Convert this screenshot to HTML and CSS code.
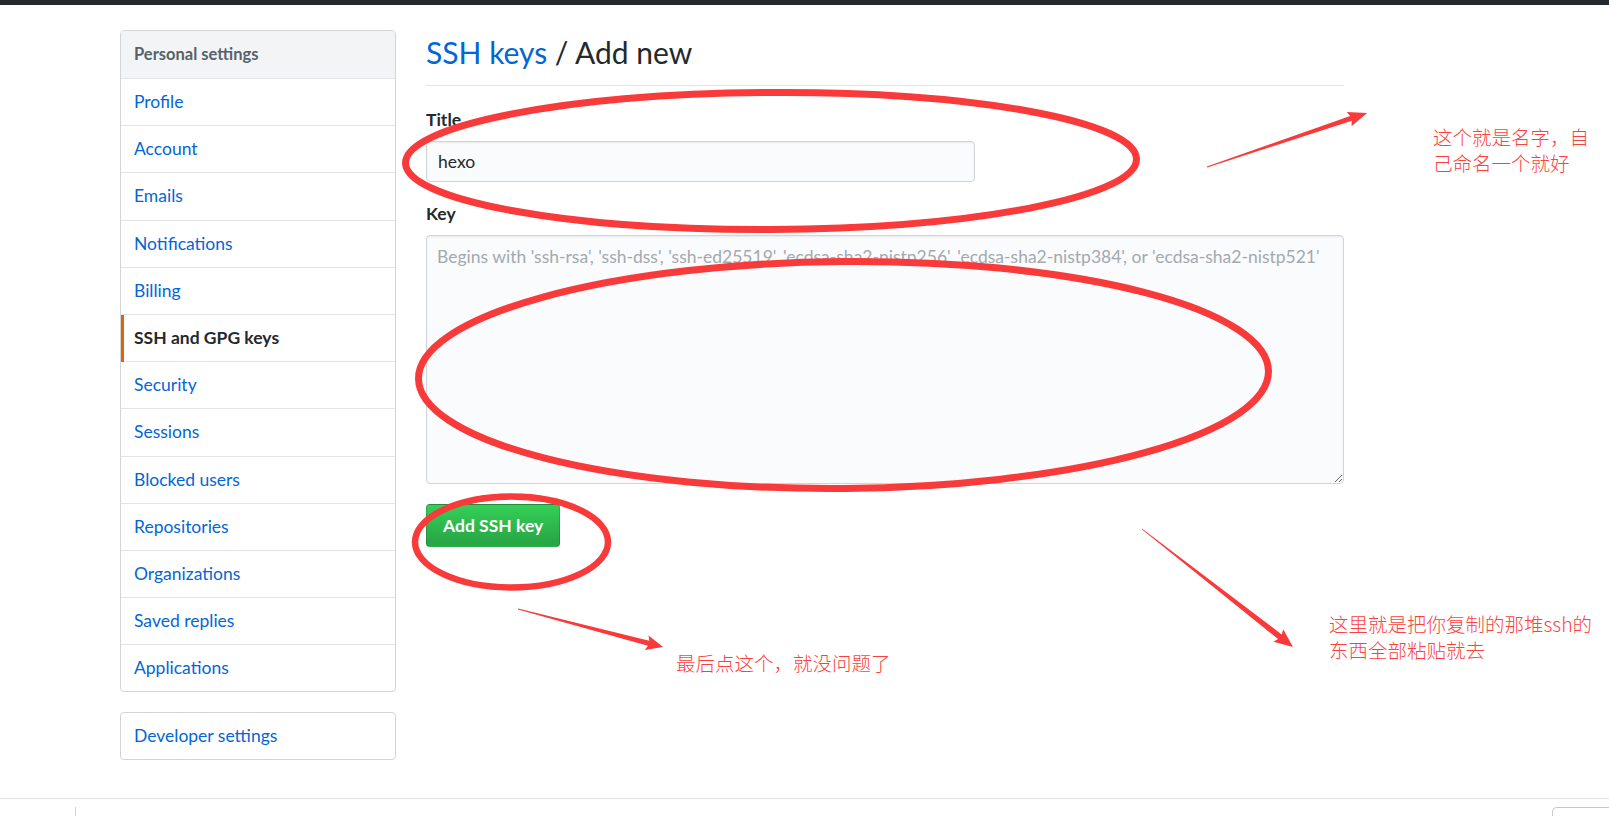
FILE: index.html
```html
<!DOCTYPE html>
<html lang="zh">
<head>
<meta charset="utf-8">
<title>SSH keys / Add new</title>
<link rel="stylesheet" href="styles.css">
</head>
<body>
<div class="topbar"></div>
<div class="page">
  <aside class="sidebar">
    <nav class="menu">
      <div class="menu-heading">Personal settings</div>
      <a class="menu-item" href="#">Profile</a>
      <a class="menu-item" href="#">Account</a>
      <a class="menu-item" href="#">Emails</a>
      <a class="menu-item" href="#">Notifications</a>
      <a class="menu-item" href="#">Billing</a>
      <a class="menu-item selected" href="#">SSH and GPG keys</a>
      <a class="menu-item" href="#">Security</a>
      <a class="menu-item" href="#">Sessions</a>
      <a class="menu-item" href="#">Blocked users</a>
      <a class="menu-item" href="#">Repositories</a>
      <a class="menu-item" href="#">Organizations</a>
      <a class="menu-item" href="#">Saved replies</a>
      <a class="menu-item" href="#">Applications</a>
    </nav>
    <nav class="menu dev">
      <a class="menu-item" href="#">Developer settings</a>
    </nav>
  </aside>
  <main class="main">
    <div class="subhead">
      <h2 class="subhead-heading"><a href="#">SSH keys</a> / Add new</h2>
    </div>
    <form class="form">
      <div class="form-group">
        <label class="label" for="title">Title</label>
        <input id="title" class="input" type="text" value="hexo">
      </div>
      <div class="form-group">
        <label class="label" for="key">Key</label>
        <textarea id="key" class="textarea" placeholder="Begins with 'ssh-rsa', 'ssh-dss', 'ssh-ed25519', 'ecdsa-sha2-nistp256', 'ecdsa-sha2-nistp384', or 'ecdsa-sha2-nistp521'"></textarea>
      </div>
      <button class="btn-primary" type="button">Add SSH key</button>
    </form>
  </main>
</div>
<footer class="footer">
  <span class="footer-tick"></span>
  <span class="footer-box"></span>
</footer>

<svg class="marks" width="1609" height="816" viewBox="0 0 1609 816" xmlns="http://www.w3.org/2000/svg">
  <g fill="none" stroke="#f83a3a">
    <ellipse cx="771" cy="161" rx="365.5" ry="68.5" stroke-width="7" transform="rotate(-0.3 771 161)"/>
    <ellipse cx="843.5" cy="375" rx="425" ry="113.5" stroke-width="7" transform="rotate(-0.5 843.5 375)"/>
    <ellipse cx="511.5" cy="542" rx="96.5" ry="45.5" stroke-width="6.5"/>
  </g>
  <g fill="#f83a3a">
    <polygon transform="translate(1207 167) rotate(-18.65)" points="0,-0.4 152,-2.6 150,-7.5 169,0 150,7.5 152,2.6 0,0.4"/>
    <polygon transform="translate(1142 529) rotate(38)" points="0,-0.4 175,-3 173,-8 191.6,0 173,8 175,3 0,0.4"/>
    <polygon transform="translate(518 609) rotate(14.69)" points="0,-0.4 135,-2.6 133,-7.5 150,0 133,7.5 135,2.6 0,0.4"/>
  </g>
</svg>
<div class="note note-title">这个就是名字，自<br>己命名一个就好</div>
<div class="note note-key">这里就是把你复制的那堆ssh的<br>东西全部粘贴就去</div>
<div class="note note-btn">最后点这个，就没问题了</div>
</body>
</html>
```

FILE: styles.css
```css
html, body {
  margin: 0;
  padding: 0;
  width: 1609px;
  height: 816px;
  overflow: hidden;
  background: #fff;
}

body {
  position: relative;
  font-family: Lato, "Liberation Sans", sans-serif;
  font-size: 17.5px;
  color: #24292e;
}

a {
  text-decoration: none;
  color: #0366d6;
}

.topbar {
  height: 5px;
  background: #24292e;
}

.page {
  display: flex;
  gap: 30px;
  margin: 25px 0 0 120px;
  width: 1224px;
}

.sidebar {
  width: 276px;
  flex: none;
  display: flex;
  flex-direction: column;
  gap: 20px;
}

.menu {
  display: flex;
  flex-direction: column;
  border: 1px solid #d1d5da;
  border-radius: 4px;
  overflow: hidden;
}

.menu-heading {
  height: 47px;
  line-height: 47px;
  padding-left: 13px;
  background: #f3f4f6;
  color: #586069;
  font-weight: 700;
  font-size: 16.5px;
  border-bottom: 1px solid #e1e4e8;
}

.menu-item {
  display: block;
  position: relative;
  height: 46.2px;
  line-height: 46.2px;
  padding-left: 13px;
  border-bottom: 1px solid #e1e4e8;
}

.menu-item:last-child {
  border-bottom: 0;
}

.menu-item.selected {
  color: #24292e;
  font-weight: 700;
}

.menu-item.selected::before {
  content: "";
  position: absolute;
  left: 0;
  top: 0;
  bottom: -1px;
  width: 3px;
  background: #e36209;
}

.menu.dev .menu-item {
  height: 46px;
  line-height: 46px;
}

.main {
  width: 918px;
  flex: none;
  padding-top: 4px;
}

.subhead {
  border-bottom: 1px solid #e1e4e8;
  padding-bottom: 13px;
}

.subhead-heading {
  margin: 0;
  font-size: 30px;
  font-weight: 400;
  line-height: 37.5px;
  color: #24292e;
}

.form {
  display: flex;
  flex-direction: column;
  align-items: flex-start;
  padding-top: 21px;
}

.form-group {
  display: flex;
  flex-direction: column;
  align-items: flex-start;
  margin-bottom: 19px;
  width: 100%;
}

.label {
  font-weight: 700;
  line-height: 26px;
  margin-bottom: 8px;
}

.input {
  box-sizing: border-box;
  width: 549px;
  height: 41px;
  padding: 0 11px;
  font: 17.5px Lato, "Liberation Sans", sans-serif;
  color: #24292e;
  background: #fafbfc;
  border: 1px solid #d1d5da;
  border-radius: 4px;
  box-shadow: inset 0 1px 2px rgba(27, 31, 35, 0.075);
  outline: none;
}

.textarea {
  box-sizing: border-box;
  width: 918px;
  height: 249px;
  padding: 8px 6px 8px 10px;
  font: 17.5px/26px Lato, "Liberation Sans", sans-serif;
  color: #24292e;
  background: #fafbfc;
  border: 1px solid #d1d5da;
  border-radius: 4px;
  box-shadow: inset 0 1px 2px rgba(27, 31, 35, 0.075);
  outline: none;
  resize: vertical;
}

.textarea::placeholder {
  color: #a3a9af;
}

.btn-primary {
  height: 43px;
  padding: 0 16px;
  margin-top: 1px;
  font: 700 17.5px Lato, "Liberation Sans", sans-serif;
  color: #fff;
  background: linear-gradient(180deg, #34d058 0%, #28a745 90%);
  border: 1px solid rgba(27, 31, 35, 0.2);
  border-radius: 4px;
}

.footer {
  position: relative;
  margin-top: 38px;
  border-top: 1px solid #e1e4e8;
  height: 20px;
  display: flex;
  justify-content: space-between;
  align-items: flex-start;
}

.footer-tick {
  margin: 8px 0 0 75px;
  width: 1px;
  height: 12px;
  background: #d1d5da;
}

.footer-box {
  margin-top: 8px;
  width: 56px;
  height: 20px;
  border-top: 1px solid #c6cacf;
  border-left: 1px solid #c6cacf;
  border-top-left-radius: 5px;
}

.marks {
  position: absolute;
  left: 0;
  top: 0;
  pointer-events: none;
}

.note {
  position: absolute;
  font-family: "Noto Sans CJK SC", sans-serif;
  font-weight: 300;
  font-size: 19.5px;
  line-height: 26px;
  color: #fc3f3f;
  white-space: nowrap;
}

.note-title {
  left: 1433px;
  top: 124px;
}

.note-key {
  left: 1329px;
  top: 611px;
}

.note-btn {
  left: 676px;
  top: 650px;
}
```
